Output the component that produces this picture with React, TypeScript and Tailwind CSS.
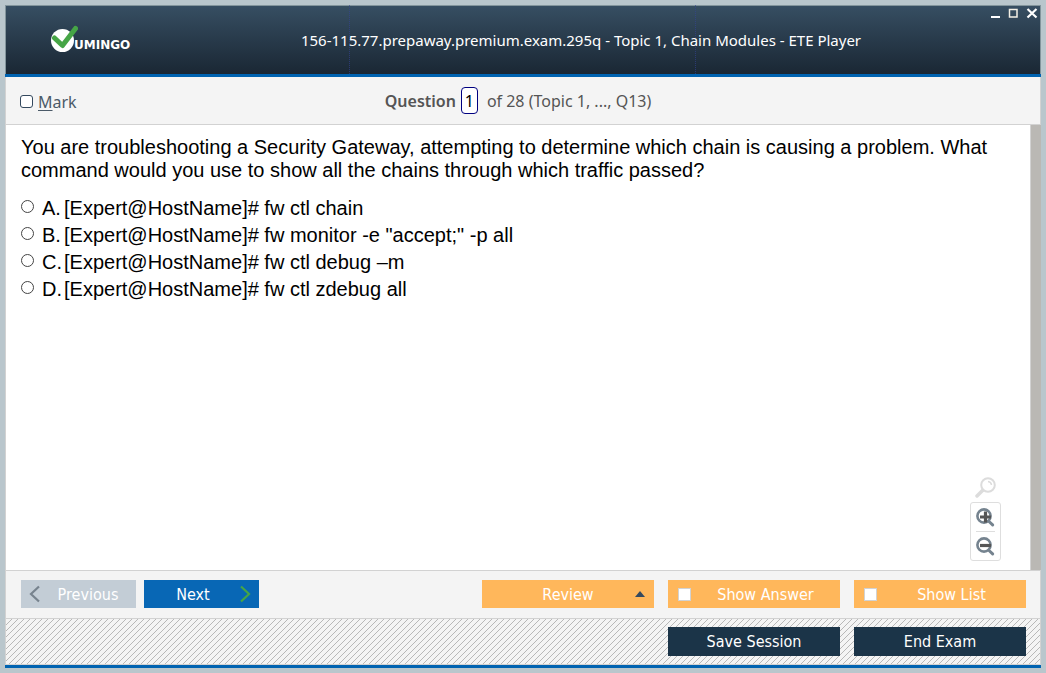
import { useState } from "react";

const answers = [
  { key: "A", text: "[Expert@HostName]# fw ctl chain" },
  { key: "B", text: '[Expert@HostName]# fw monitor -e "accept;" -p all' },
  { key: "C", text: "[Expert@HostName]# fw ctl debug –m" },
  { key: "D", text: "[Expert@HostName]# fw ctl zdebug all" },
];

function Logo() {
  return (
    <div className="flex items-start text-white">
      <svg width="28" height="28" viewBox="0 0 28 28" aria-hidden="true">
        <circle cx="12.500" cy="15.500" r="11.500" fill="#fff" />
        <path d="M4.500 13 L12.500 20.500 L25.500 3.500" fill="none" stroke="#46a546" strokeWidth="5" strokeLinecap="round" strokeLinejoin="round" />
      </svg>
      <span className="-ml-1 mt-3 font-['DejaVu_Sans'] text-[12px] leading-[16px] font-bold">UMINGO</span>
    </div>
  );
}

function WindowControls() {
  return (
    <div className="flex justify-end gap-2 pr-[3px] pt-[2px] text-white">
      <button type="button" aria-label="Minimize" className="h-[12px] w-[10px]">
        <svg width="10" height="12" viewBox="0 0 10 12"><path d="M1 9h9v2H1z" fill="#fff" /></svg>
      </button>
      <button type="button" aria-label="Maximize" className="h-[12px] w-[10px]">
        <svg width="10" height="12" viewBox="0 0 10 12"><rect x="1.500" y="2.500" width="7.500" height="7.500" fill="none" stroke="#f4f0e6" strokeWidth="1.500" /></svg>
      </button>
      <button type="button" aria-label="Close" className="h-[12px] w-[12px]">
        <svg width="12" height="12" viewBox="0 0 12 12"><path d="M1.500 2l9 8.500M10.500 2l-9 8.500" stroke="#fff" strokeWidth="2.200" /></svg>
      </button>
    </div>
  );
}

function ZoomIcon({ plus }: { plus?: boolean }) {
  return (
    <svg width="19" height="19" viewBox="0 0 19 19" aria-hidden="true">
      <circle cx="8" cy="8" r="6.600" fill="none" stroke="#75838f" strokeWidth="2.600" />
      <path d="M13 13.500l3.600 3.400" stroke="#75838f" strokeWidth="3" strokeLinecap="round" />
      <path d={plus ? "M4 9h11M9.500 3.500v11" : "M4 8.500h11"} stroke="#555" strokeWidth="3.200" />
    </svg>
  );
}

export default function App() {
  const [marked, setMarked] = useState(false);
  const [choice, setChoice] = useState("");
  return (
    <div className="flex min-h-screen flex-col bg-[#b9c6cc] p-[5px] font-['Noto_Sans',sans-serif]">
      <header className="relative grid h-[72px] grid-cols-[1fr_auto_1fr] border-b-[3px] border-[#0063b1] bg-linear-to-b from-[#374f63] to-[#1a2734] shadow-[inset_1px_1px_0_#83959c,inset_-1px_0_0_#83959c]">
        <div className="pointer-events-none absolute inset-0 grid grid-cols-3">
          <div className="border-r border-dotted border-[#34429a]/60" />
          <div className="border-r border-dotted border-[#34429a]/60" />
        </div>
        <div className="pt-5 pl-[45px]"><Logo /></div>
        <h1 className="relative pt-6 pl-[116px] text-[15px] leading-[22px] whitespace-nowrap text-white">
          156-115.77.prepaway.premium.exam.295q - Topic 1, Chain Modules - ETE Player
        </h1>
        <WindowControls />
      </header>

      <div className="grid h-12 grid-cols-[1fr_auto_1fr] items-center border-x border-b border-[#d2d2d2] bg-[#f4f4f4] text-[16px] text-[#555]">
        <label className="flex items-center gap-[5px] pt-[2px] pl-[14px] text-[#4b5a68]">
          <input type="checkbox" checked={marked} onChange={(e) => setMarked(e.target.checked)} className="size-[13px] appearance-none rounded-[3px] border border-[#34495e] bg-white checked:bg-[#34495e]" />
          <span><span className="underline underline-offset-2">M</span>ark</span>
        </label>
        <div className="flex items-center pr-[10px] whitespace-nowrap">
          <label htmlFor="question" className="font-semibold">Question</label>
          <input id="question" defaultValue="1" className="mr-[9px] ml-[5px] h-[27px] w-[17px] rounded-[4px] border border-[#000080] bg-white text-center text-black" />
          <span>of 28 (Topic 1, ..., Q13)</span>
        </div>
      </div>

      <main className="flex flex-1 border-b border-l border-[#d2d2d2] bg-white font-['Liberation_Sans',sans-serif] text-[20px] leading-[23px] text-black">
        <div className="flex flex-1 flex-col border-r border-[#d2d2d2] pt-[11px] pr-[29px] pl-[15px]">
          <p>
            You are troubleshooting a Security Gateway, attempting to determine which chain is causing a problem. What command would you use to show all the chains through which traffic passed?
          </p>
          <fieldset className="pt-[13px]">
            {answers.map((a) => (
              <label key={a.key} className="flex h-[27px] items-center">
                <input type="radio" name="answer" checked={choice === a.key} onChange={() => setChoice(a.key)} className="mb-1 size-[13px] appearance-none rounded-full border border-[#444] bg-white checked:border-4" />
                <span className="ml-2 w-[22px]">{a.key}.</span>
                <span>{a.text}</span>
              </label>
            ))}
          </fieldset>
          <div className="mt-auto flex flex-col items-center self-end pb-[9px]">
            <button type="button" aria-label="Reset zoom" className="mb-1 h-[22px]">
              <svg width="22" height="22" viewBox="0 0 22 22">
                <path d="M8 14l-6 6" stroke="#dcdcdc" strokeWidth="3.500" strokeLinecap="round" />
                <circle cx="13" cy="9" r="6.800" fill="#fff" stroke="#dcdcdc" strokeWidth="2" />
                <path d="M13 5.500a4 4 0 0 1 3.500 3.500" fill="none" stroke="#dcdcdc" strokeWidth="1.500" />
              </svg>
            </button>
            <div className="flex w-[31px] flex-col items-center rounded-[3px] border border-[#dedede]">
              <button type="button" aria-label="Zoom in" className="flex h-[28px] items-center"><ZoomIcon plus /></button>
              <div className="h-px w-[19px] bg-[#dedede]" />
              <button type="button" aria-label="Zoom out" className="flex h-[28px] items-center"><ZoomIcon /></button>
            </div>
          </div>
        </div>
        <div className="w-[10px] bg-[#bab8b4]" />
      </main>

      <footer className="font-['DejaVu_Sans_Condensed','DejaVu_Sans',sans-serif] text-[16px] leading-[28px] text-white">
        <div className="flex h-12 border-x border-b border-[#d2d2d2] bg-[#f4f4f4] px-[14px] pt-[9px]">
          <button type="button" className="ml-px flex h-7 w-[115px] items-center bg-[#c3cdd6] pl-2">
            <svg width="11" height="18" viewBox="0 0 11 18"><path d="M10 1.500L2 9l8 7.500" fill="none" stroke="#77838e" strokeWidth="2.200" /></svg>
            <span className="flex-1 pt-[2px]">Previous</span>
          </button>
          <button type="button" className="ml-2 flex h-7 w-[115px] items-center bg-[#0867b5] pr-2">
            <span className="flex-1 pt-[2px] pl-[2px]">Next</span>
            <svg width="11" height="18" viewBox="0 0 11 18"><path d="M1 1.500L9 9l-8 7.500" fill="none" stroke="#46a546" strokeWidth="2.200" /></svg>
          </button>
          <div className="ml-auto flex gap-[14px]">
            <button type="button" className="flex h-7 w-[172px] items-center bg-[#ffb75b] pr-[9px]">
              <span className="flex-1 pt-[2px] pl-[19px]">Review</span>
              <svg width="10" height="6" viewBox="0 0 10 6"><path d="M5 0l5 6H0z" fill="#34495e" /></svg>
            </button>
            {["Show Answer", "Show List"].map((t) => (
              <label key={t} className="flex h-7 w-[172px] items-center bg-[#ffb75b] pl-[10px]">
                <input type="checkbox" className="mt-px size-[13px] appearance-none border border-[#d2d2d2] bg-white checked:bg-[#34495e]" />
                <span className="flex-1 pt-[2px] text-center">{t}</span>
              </label>
            ))}
          </div>
        </div>
        <div className="flex h-[46px] justify-end gap-[14px] border-x border-b border-[#d2d2d2] bg-[#f4f4f4] bg-[linear-gradient(135deg,transparent_44%,#b8b8b8_44%,#b8b8b8_56%,transparent_56%)] bg-size-[6px_6px] px-[14px] pt-2">
          <button type="button" className="h-[29px] w-[172px] bg-[#1b3448] pt-px">Save Session</button>
          <button type="button" className="h-[29px] w-[172px] bg-[#1b3448] pt-px">End Exam</button>
        </div>
        <div className="h-[3px] bg-[#0063b1]" />
      </footer>
    </div>
  );
}
